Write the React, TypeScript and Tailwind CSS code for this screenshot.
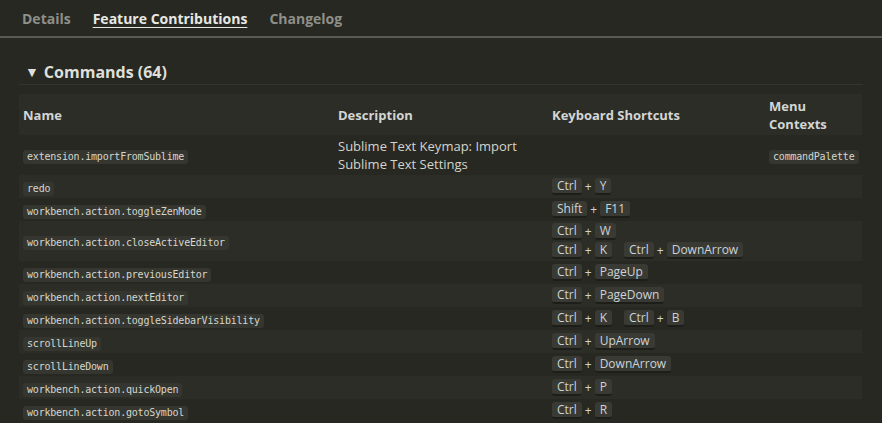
import React from "react";

type Row = { name: string; desc?: string[]; keys?: string[][][]; menu?: string };

const rows: Row[] = [
  { name: "extension.importFromSublime", desc: ["Sublime Text Keymap: Import", "Sublime Text Settings"], menu: "commandPalette" },
  { name: "redo", keys: [[["Ctrl", "Y"]]] },
  { name: "workbench.action.toggleZenMode", keys: [[["Shift", "F11"]]] },
  { name: "workbench.action.closeActiveEditor", keys: [[["Ctrl", "W"]], [["Ctrl", "K"], ["Ctrl", "DownArrow"]]] },
  { name: "workbench.action.previousEditor", keys: [[["Ctrl", "PageUp"]]] },
  { name: "workbench.action.nextEditor", keys: [[["Ctrl", "PageDown"]]] },
  { name: "workbench.action.toggleSidebarVisibility", keys: [[["Ctrl", "K"], ["Ctrl", "B"]]] },
  { name: "scrollLineUp", keys: [[["Ctrl", "UpArrow"]]] },
  { name: "scrollLineDown", keys: [[["Ctrl", "DownArrow"]]] },
  { name: "workbench.action.quickOpen", keys: [[["Ctrl", "P"]]] },
  { name: "workbench.action.gotoSymbol", keys: [[["Ctrl", "R"]]] },
];

function Code({ children }: { children: React.ReactNode }) {
  return (
    <code className="inline-block rounded-[3px] bg-[#35362f] px-[4px] py-0 font-['DejaVu_Sans_Mono',monospace] text-[10px] leading-[14px] tracking-[-0.2px] text-[#d6d6ce]">
      {children}
    </code>
  );
}

function Kbd({ children }: { children: React.ReactNode }) {
  return (
    <span className="inline-flex h-[17px] items-center rounded-[3px] border-b-2 border-[#1d1e1a] bg-[#393a34] px-[5px] text-[12px] leading-[15px] text-[#cdd3d8]">
      {children}
    </span>
  );
}

function Chord({ keys }: { keys: string[] }) {
  return (
    <span className="flex items-center gap-[3px]">
      <Kbd>{keys[0]}</Kbd>
      <span className="text-[12px] text-[#cdd3d8]">+</span>
      <Kbd>{keys[1]}</Kbd>
    </span>
  );
}

export default function App() {
  return (
    <div className="h-[423px] w-[882px] overflow-hidden bg-[#272822] font-['Open_Sans',sans-serif] text-[#d4d4cc]">
      <nav className="flex h-[38px] items-center gap-[22px] border-b-2 border-[#5a5a55] px-[22px] text-[14px] font-bold">
        <span className="text-[#8e8f89]">Details</span>
        <span className="text-[#e8e8e2] underline underline-offset-[3px]">Feature Contributions</span>
        <span className="text-[#8e8f89]">Changelog</span>
      </nav>
      <div className="px-[19px]">
        <div className="mt-[23px] flex h-[24px] items-center gap-[5px] border-b border-[#34352f] pb-[2px] pl-[6px] text-[16px] font-bold text-[#dedfd8]">
          <span className="text-[14px]">▼</span>
          <span>Commands (64)</span>
        </div>
        <table className="mt-[9px] w-[843px] table-fixed border-collapse text-[13px] leading-[18px]">
          <colgroup>
            <col className="w-[315px]" />
            <col className="w-[214px]" />
            <col className="w-[217px]" />
            <col className="w-[97px]" />
          </colgroup>
          <thead>
            <tr className="h-[41px] bg-[#2c2d27] text-left font-bold text-[#d3d6d4]">
              <th className="px-[4px]">Name</th>
              <th className="px-[4px]">Description</th>
              <th className="px-[4px]">Keyboard Shortcuts</th>
              <th className="px-[4px]">Menu Contexts</th>
            </tr>
          </thead>
          <tbody>
            {rows.map((r, i) => (
              <tr
                key={r.name}
                className={
                  (i % 2 === 1 ? "bg-[#2c2d27] " : "") +
                  (r.desc || (r.keys && r.keys.length > 1) ? "h-[40px]" : "h-[23px]")
                }
              >
                <td className="px-[4px] py-0 align-middle">
                  <Code>{r.name}</Code>
                </td>
                <td className="px-[4px] py-0 align-middle">
                  {r.desc?.map((d) => (
                    <div key={d}>{d}</div>
                  ))}
                </td>
                <td className="px-[4px] py-0 align-middle">
                  {r.keys && (
                    <div className="flex flex-col gap-[1px]">
                      {r.keys.map((line, li) => (
                        <div key={li} className="flex items-center gap-[12px]">
                          {line.map((c, ci) => (
                            <Chord key={ci} keys={c} />
                          ))}
                        </div>
                      ))}
                    </div>
                  )}
                </td>
                <td className="px-[4px] py-0 align-middle">{r.menu && <Code>{r.menu}</Code>}</td>
              </tr>
            ))}
          </tbody>
        </table>
      </div>
    </div>
  );
}
